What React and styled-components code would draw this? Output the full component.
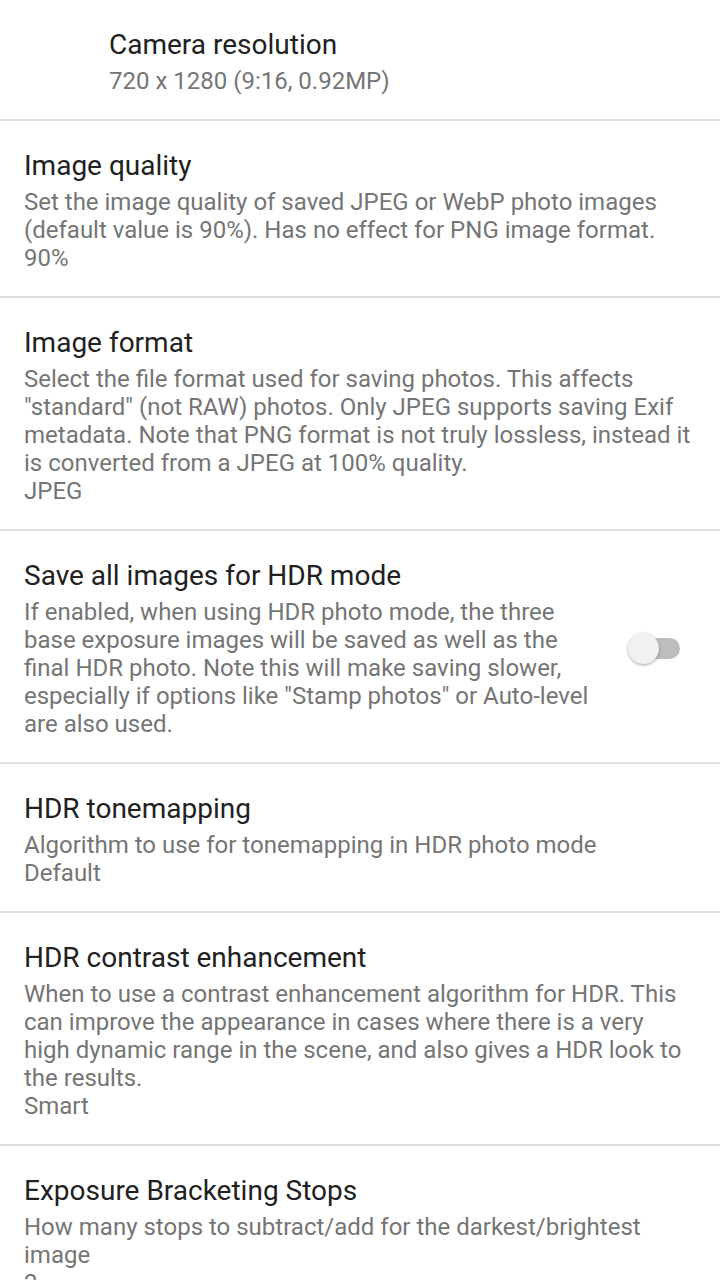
import styled, { createGlobalStyle } from 'styled-components';

const GlobalStyle = createGlobalStyle`
  html, body {
    margin: 0;
    padding: 0;
    background: #ffffff;
  }
  body {
    font-family: Roboto, "Noto Sans", sans-serif;
    -webkit-font-smoothing: antialiased;
  }
`;

const prefs = [
  {
    title: 'Camera resolution',
    summary: ['720 x 1280 (9:16, 0.92MP)'],
    indent: true,
  },
  {
    title: 'Image quality',
    summary: [
      'Set the image quality of saved JPEG or WebP photo images (default value is 90%). Has no effect for PNG image format.',
      '90%',
    ],
  },
  {
    title: 'Image format',
    summary: [
      'Select the file format used for saving photos. This affects "standard" (not RAW) photos. Only JPEG supports saving Exif metadata. Note that PNG format is not truly lossless, instead it is converted from a JPEG at 100% quality.',
      'JPEG',
    ],
  },
  {
    title: 'Save all images for HDR mode',
    summary: [
      'If enabled, when using HDR photo mode, the three base exposure images will be saved as well as the final HDR photo. Note this will make saving slower, especially if options like "Stamp photos" or Auto-level are also used.',
    ],
    toggle: true,
  },
  {
    title: 'HDR tonemapping',
    summary: ['Algorithm to use for tonemapping in HDR photo mode', 'Default'],
  },
  {
    title: 'HDR contrast enhancement',
    summary: [
      'When to use a contrast enhancement algorithm for HDR. This can improve the appearance in cases where there is a very high dynamic range in the scene, and also gives a HDR look to the results.',
      'Smart',
    ],
  },
  {
    title: 'Exposure Bracketing Stops',
    summary: ['How many stops to subtract/add for the darkest/brightest image', '2'],
  },
];

export default function App() {
  return (
    <>
      <GlobalStyle />
      <List>
        {prefs.map((p) => (
          <Item key={p.title}>
            <TextBlock $indent={p.indent}>
              <Title>{p.title}</Title>
              <Summary>
                {p.summary.map((line, i) => (
                  <SummaryLine key={i}>{line}</SummaryLine>
                ))}
              </Summary>
            </TextBlock>
            {p.toggle && (
              <Widget>
                <Switch>
                  <Track />
                  <Thumb />
                </Switch>
              </Widget>
            )}
          </Item>
        ))}
      </List>
    </>
  );
}

const List = styled.div`
  display: flex;
  flex-direction: column;
  width: 720px;
  height: 1280px;
  overflow: hidden;
`;

const Item = styled.div`
  display: flex;
  align-items: center;
  padding: 29px 28px 24px 24px;
  border-bottom: 2px solid #dfdfdf;
  flex-shrink: 0;
`;

const TextBlock = styled.div`
  flex: 1;
  min-width: 0;
  padding-left: ${({ $indent }) => ($indent ? '85px' : '0')};
`;

const Title = styled.div`
  font-size: 28px;
  line-height: 32px;
  color: #212121;
`;

const Summary = styled.div`
  margin-top: 6px;
  font-size: 24px;
  line-height: 28px;
  color: #757575;
`;

const SummaryLine = styled.div``;

const Widget = styled.div`
  width: 84.5px;
  display: flex;
  justify-content: flex-end;
  flex-shrink: 0;
`;

const Switch = styled.div`
  position: relative;
  width: 52px;
  height: 32px;
  margin-right: 12px;
`;

const Track = styled.div`
  position: absolute;
  left: 4px;
  right: 0;
  top: 5px;
  height: 21px;
  border-radius: 11px;
  background: #bdbdbd;
`;

const Thumb = styled.div`
  position: absolute;
  left: 0;
  top: 0;
  width: 31px;
  height: 31px;
  border-radius: 50%;
  background: #f1f1f1;
  box-shadow: 0 1px 3px rgba(0, 0, 0, 0.35);
`;
